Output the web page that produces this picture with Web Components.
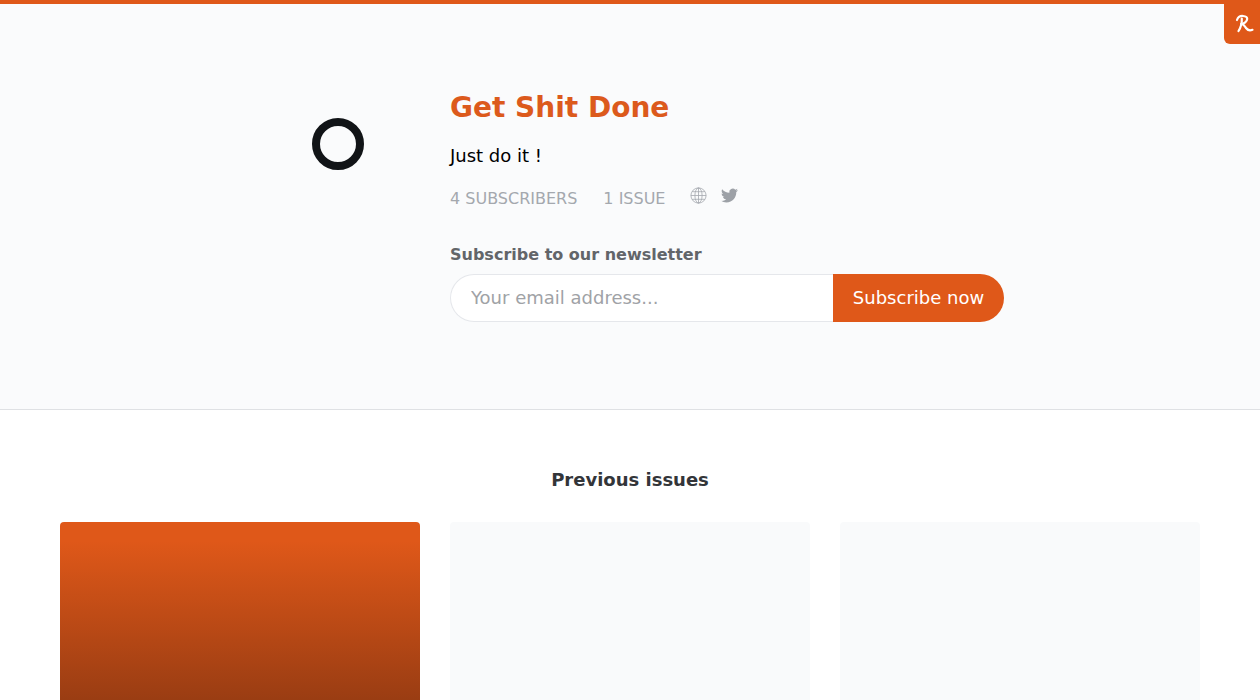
<!DOCTYPE html>
<html lang="en">
<head>
<meta charset="utf-8">
<title>Get Shit Done</title>
<style>
  html { overflow: hidden; }
  body { margin: 0; background: #fff; font-family: "DejaVu Sans", sans-serif; }
</style>
</head>
<body>
<brand-badge></brand-badge>
<news-hero>
  <span slot="title">Get Shit Done</span>
  <span slot="tagline">Just do it !</span>
  <span slot="subscribers">4 SUBSCRIBERS</span>
  <span slot="issues">1 ISSUE</span>
</news-hero>
<issue-list heading="Previous issues">
  <issue-card variant="cover"></issue-card>
  <issue-card></issue-card>
  <issue-card></issue-card>
</issue-list>

<script>
class BrandBadge extends HTMLElement {
  connectedCallback() {
    this.attachShadow({ mode: 'open' });
    this.shadowRoot.innerHTML = `
    <style>
    :host {
      position: absolute;
      top: 0;
      right: 0;
      width: 36px;
      height: 44px;
      box-sizing: border-box;
      padding: 14px 0 0 11px;
      background: #df5819;
      border-bottom-left-radius: 6px;
      display: flex;
      align-items: flex-start;
    }
    svg { display: block; }
    </style>
    <svg width="20" height="20" viewBox="0 0 20 20" fill="none" stroke="#fff" stroke-width="2.200" stroke-linecap="round" stroke-linejoin="round">
      <path d="M2 6C3 3 5.500 1.800 8 2c2.800.2 4.300 1.200 4.200 3-.2 2.600-3 4.800-6 5"/>
      <path d="M6.800 4.500C7 9 5.800 13.500 3.500 17"/>
      <path d="M6.500 10c2.500.4 3.300 2.300 4.500 4 1.600 2.300 3.700 2.800 6.500 1.800"/>
    </svg>
    `;
  }
}
customElements.define('brand-badge', BrandBadge);

class SubscribeForm extends HTMLElement {
  connectedCallback() {
    this.attachShadow({ mode: 'open' });
    this.shadowRoot.innerHTML = `
    <style>
    :host { display: block; }
    label {
      display: block;
      font-size: 16px;
      line-height: 24px;
      font-weight: 700;
      color: #626569;
      margin-bottom: 7px;
    }
    .row { display: flex; width: 554px; height: 48px; }
    input {
      flex: 1;
      min-width: 0;
      box-sizing: border-box;
      margin: 0;
      padding: 0 20px 2px;
      font: 18px "DejaVu Sans", sans-serif;
      color: #111;
      background: #fff;
      border: 1px solid #e5e7eb;
      border-right: 0;
      border-radius: 24px 0 0 24px;
      outline: none;
    }
    input::placeholder { color: #a0a2a6; opacity: 1; }
    button {
      width: 171px;
      margin: 0;
      padding: 0 0 2px;
      border: 0;
      border-radius: 0 24px 24px 0;
      background: #df5819;
      color: #fff;
      font: 18px "DejaVu Sans", sans-serif;
    }
    </style>
    <label for="email">Subscribe to our newsletter</label>
    <div class="row">
      <input id="email" type="email" placeholder="Your email address...">
      <button type="button">Subscribe now</button>
    </div>
    `;
  }
}
customElements.define('subscribe-form', SubscribeForm);

class NewsHero extends HTMLElement {
  connectedCallback() {
    this.attachShadow({ mode: 'open' });
    this.shadowRoot.innerHTML = `
    <style>
    :host {
      display: block;
      background: #fafbfc;
      border-top: 4px solid #df5819;
      border-bottom: 1px solid #dfe1e4;
      height: 405px;
      box-sizing: content-box;
    }
    .inner {
      width: 768px;
      margin: 0 auto;
      padding-top: 85px;
      display: flex;
      gap: 20px;
    }
    .logo {
      width: 184px;
      flex: none;
      display: flex;
      justify-content: center;
      padding-top: 29px;
      height: 52px;
    }
    .ring {
      width: 52px;
      height: 52px;
      box-sizing: border-box;
      border: 8px solid #111417;
      border-radius: 50%;
    }
    h1 {
      margin: 0;
      font-size: 28px;
      line-height: 38px;
      font-weight: 700;
      color: #dc5a1c;
    }
    .tagline {
      margin-top: 15px;
      font-size: 18px;
      line-height: 28px;
      color: #000;
    }
    .meta {
      margin-top: 14px;
      display: flex;
      align-items: center;
      height: 28px;
      font-size: 16px;
      color: #a4a8ae;
    }
    .meta .issues { margin-left: 26px; }
    .meta svg { display: block; margin-top: -5px; }
    .meta .globe { margin-left: 25px; }
    .meta .bird { margin-left: 14px; }
    subscribe-form { margin-top: 31px; }
    </style>
    <div class="inner">
      <div class="logo"><div class="ring"></div></div>
      <div>
        <h1><slot name="title"></slot></h1>
        <div class="tagline"><slot name="tagline"></slot></div>
        <div class="meta">
          <span><slot name="subscribers"></slot></span>
          <span class="issues"><slot name="issues"></slot></span>
          <svg class="globe" width="17" height="17" viewBox="0 0 17 17" fill="none" stroke="#a4a8ae" stroke-width=".8">
            <circle cx="8.500" cy="8.500" r="7.600"/>
            <ellipse cx="8.500" cy="8.500" rx="3.600" ry="7.600"/>
            <path d="M8.500.9v15.200M.9 8.500h15.200M2 4.700h13M2 12.300h13"/>
          </svg>
          <svg class="bird" width="17" height="17" viewBox="0 0 24 24" fill="#9da1a7">
            <path d="M23.950 4.570a10 10 0 0 1-2.820.77 4.960 4.960 0 0 0 2.160-2.720c-.95.550-2 .96-3.130 1.190a4.920 4.920 0 0 0-8.380 4.480C7.690 8.100 4.070 6.130 1.640 3.160a4.820 4.820 0 0 0-.67 2.480c0 1.710.87 3.210 2.190 4.100a4.900 4.900 0 0 1-2.230-.62v.06a4.920 4.920 0 0 0 3.950 4.830 4.990 4.990 0 0 1-2.210.08 4.940 4.940 0 0 0 4.610 3.420A9.870 9.870 0 0 1 0 19.540a14 14 0 0 0 7.560 2.210c9.050 0 14-7.500 14-13.980 0-.21 0-.42-.02-.63a9.940 9.940 0 0 0 2.460-2.550z"/>
          </svg>
        </div>
        <subscribe-form></subscribe-form>
      </div>
    </div>
    `;
  }
}
customElements.define('news-hero', NewsHero);

class IssueList extends HTMLElement {
  connectedCallback() {
    this.attachShadow({ mode: 'open' });
    this.shadowRoot.innerHTML = `
    <style>
    :host { display: block; padding: 56px 60px 0; }
    h2 {
      margin: 0 0 28px;
      text-align: center;
      font-size: 18px;
      line-height: 28px;
      font-weight: 700;
      color: #333539;
    }
    .grid { display: grid; grid-template-columns: repeat(3, 1fr); gap: 30px; }
    </style>
    <h2>${this.getAttribute('heading')}</h2>
    <div class="grid"><slot></slot></div>
    `;
  }
}
customElements.define('issue-list', IssueList);

class IssueCard extends HTMLElement {
  connectedCallback() {
    this.attachShadow({ mode: 'open' });
    this.shadowRoot.innerHTML = `
    <style>
    :host {
      display: block;
      height: 240px;
      border-radius: 4px;
      background: #f9fafb;
    }
    :host([variant="cover"]) {
      background: linear-gradient(#df5819 8%, #7f3210 100%);
    }
    </style>
    `;
  }
}
customElements.define('issue-card', IssueCard);
</script>
</body>
</html>
